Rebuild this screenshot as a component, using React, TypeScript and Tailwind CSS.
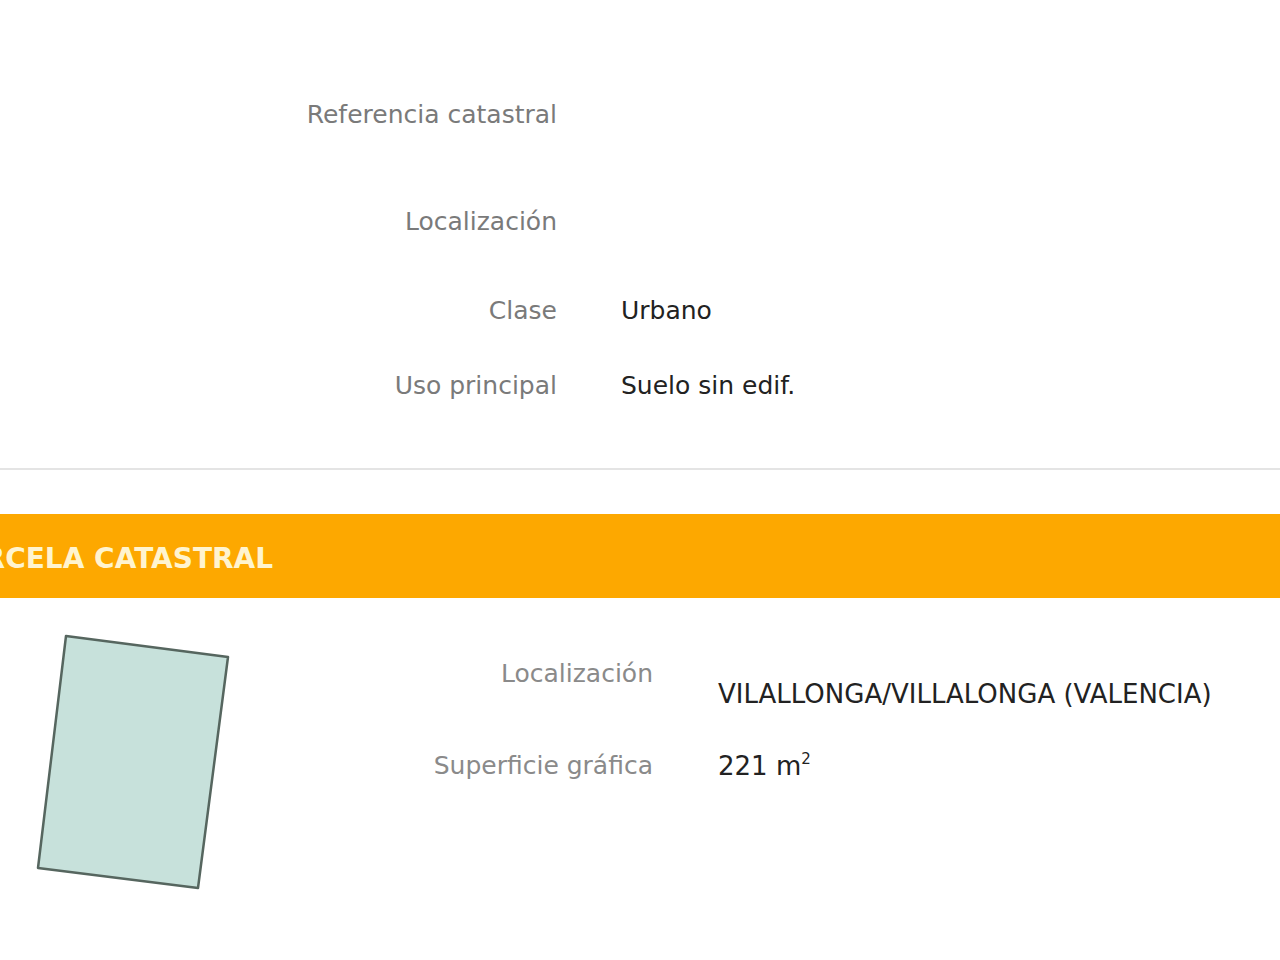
import React from "react";

type Row = { label: string; value?: string; h: string };

const TOP_ROWS: Row[] = [
  { label: "Referencia catastral", h: "h-[107px]" },
  { label: "Localización", h: "h-[89px]" },
  { label: "Clase", value: "Urbano", h: "h-[75px]" },
  { label: "Uso principal", value: "Suelo sin edif.", h: "h-[28px]" },
];

function ParcelShape() {
  return (
    <svg width="260" height="290" viewBox="0 0 260 290" className="block shrink-0">
      <polygon
        points="66,16 228,37 198,268 38,248"
        fill="#c7e1db"
        stroke="#56665f"
        strokeWidth="2.5"
        strokeLinejoin="round"
      />
    </svg>
  );
}

export default function App() {
  return (
    <div className="w-[1280px] h-[960px] bg-white overflow-hidden font-['DejaVu_Sans',sans-serif]">
      {/* datos descriptivos del inmueble */}
      <div className="pt-[101px] flex flex-col">
        {TOP_ROWS.map((r) => (
          <div key={r.label} className={`flex gap-[64px] ${r.h}`}>
            <div className="w-[557px] text-right text-[25px] leading-[28px] text-[#7a7a7a]">{r.label}</div>
            <div className="text-[25px] leading-[28px] text-[#222]">{r.value}</div>
          </div>
        ))}
      </div>

      <div className="mt-[68px] h-[2px] bg-[#e4e4e4]" />

      {/* cabecera de sección */}
      <div className="mt-[44px] h-[84px] bg-[#fda800] flex items-center overflow-hidden">
        <div className="-ml-[56px] pt-[5px] text-[28px] font-bold text-[#fff4cf] whitespace-nowrap">
          PARCELA CATASTRAL
        </div>
      </div>

      <div className="flex">
        <div className="pt-[22px]">
          <ParcelShape />
        </div>
        <div>
          <div className="flex gap-[65px] pt-[62px]">
            <div className="w-[393px] text-right text-[25px] leading-[28px] text-[#8a8a8a]">Localización</div>
            <div className="pt-[20px] text-[26px] leading-[28px] text-[#222]">
              VILALLONGA/VILLALONGA (VALENCIA)
            </div>
          </div>
          <div className="flex gap-[65px] mt-[44px]">
            <div className="w-[393px] text-right text-[25px] leading-[28px] text-[#8a8a8a]">Superficie gráfica</div>
            <div className="text-[26px] leading-[28px] text-[#222]">
              221 m<span className="relative -top-[11px] text-[15px]">2</span>
            </div>
          </div>
        </div>
      </div>
    </div>
  );
}
